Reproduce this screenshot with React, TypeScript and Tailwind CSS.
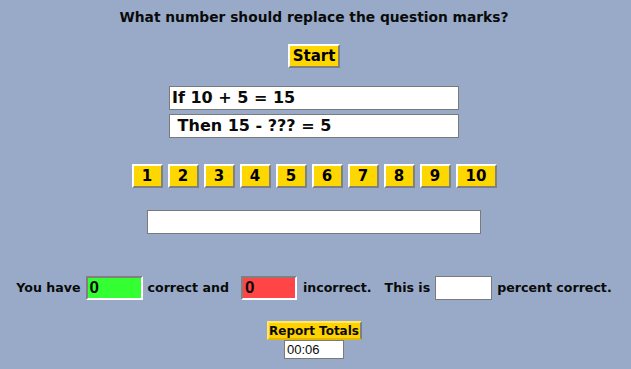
import React from "react";

const nums = [1, 2, 3, 4, 5, 6, 7, 8, 9, 10];

const btn =
  "bg-[#ffd700] border-2 border-t-white border-l-white border-r-[#808080] border-b-[#808080] text-black font-bold flex items-center justify-center";

export default function App() {
  return (
    <div className="min-h-[369px] w-full bg-[#98aac8] font-['DejaVu_Sans',Verdana,sans-serif] text-[#0a0a0a]">
      <div className="flex flex-col items-center pt-[7px] pr-[3px]">
        <h1 className="text-[13.8px] leading-[20px] font-bold">What number should replace the question marks?</h1>

        <button className={`${btn} mt-[17px] w-[52px] h-[24px] text-[15px]`}>Start</button>

        <div className="mt-[18px] w-[290px] h-[24px] bg-white border border-[#7a7a7a] flex items-center pl-[2px] text-[16px] font-bold whitespace-pre">
          If 10 + 5 = 15
        </div>
        <div className="mt-[4px] w-[290px] h-[24px] bg-white border border-[#7a7a7a] flex items-center pl-[2px] text-[16px] font-bold whitespace-pre">
          {" Then 15 - ??? = 5"}
        </div>

        <div className="mt-[26px] flex gap-[5px]">
          {nums.map((n) => (
            <button
              key={n}
              className={`${btn} ${n === 10 ? "w-[41px]" : "w-[31px]"} h-[24px] text-[15px]`}
            >
              {n}
            </button>
          ))}
        </div>

        <div className="mt-[22px] w-[334px] h-[24px] bg-white border border-[#7a7a7a]" />

        <div className="mt-[42px] flex items-center text-[12.6px] font-bold h-[24px]">
          <span>You have</span>
          <div className="ml-[5px] w-[57px] h-[24px] bg-[#33ff33] border-2 border-t-[#808080] border-l-[#808080] border-r-white border-b-white flex items-center pl-[2px] font-['Liberation_Sans',Arial,sans-serif] text-[17px]">
            0
          </div>
          <span className="ml-[5px]">correct and</span>
          <div className="ml-[12px] w-[56px] h-[24px] bg-[#ff4545] border-2 border-t-[#808080] border-l-[#808080] border-r-white border-b-white flex items-center pl-[2px] font-['Liberation_Sans',Arial,sans-serif] text-[17px]">
            0
          </div>
          <span className="ml-[6px]">incorrect.</span>
          <span className="ml-[13px]">This is</span>
          <div className="ml-[5px] w-[57px] h-[24px] bg-white border border-[#7a7a7a]" />
          <span className="ml-[5px]">percent correct.</span>
        </div>

        <button className="mt-[21px] w-[95px] h-[19px] bg-[#ffd200] border-2 border-t-[#ffe866] border-l-[#ffe866] border-r-[#808080] border-b-[#e0b800] text-[12px] font-bold flex items-center justify-center">
          Report Totals
        </button>
        <div className="w-[60px] h-[19px] bg-white border border-[#7a7a7a] flex items-center pl-[2px] font-['Liberation_Sans',Arial,sans-serif] text-[13px]">
          00:06
        </div>
      </div>
    </div>
  );
}
